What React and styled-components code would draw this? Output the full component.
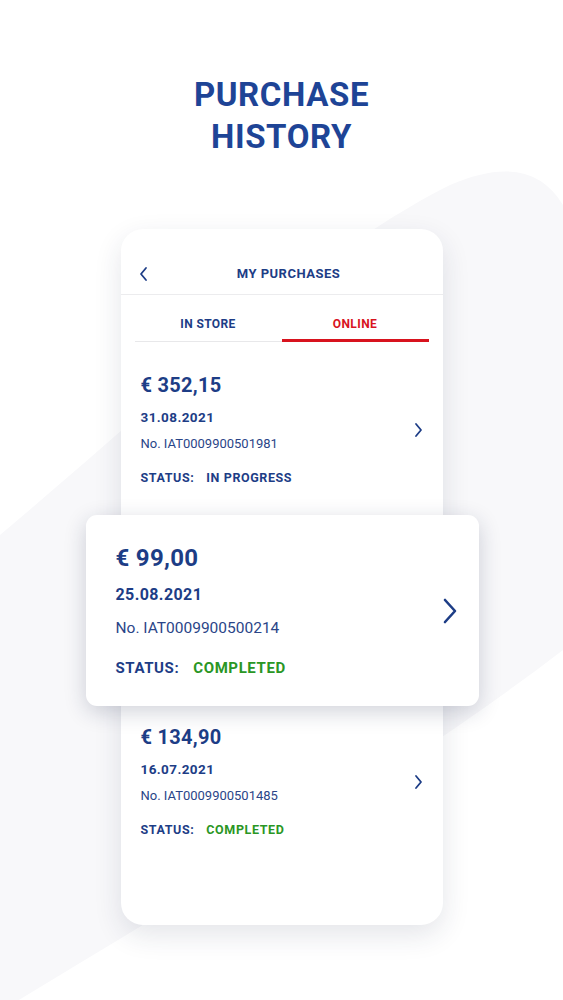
import React from "react";
import styled, { createGlobalStyle } from "styled-components";

const GlobalStyle = createGlobalStyle`
  html, body {
    margin: 0;
    padding: 0;
    background: #fff;
  }
  body {
    font-family: Roboto, "Noto Sans", "Liberation Sans", sans-serif;
  }
`;

const NAVY = "#1d3d86";

const purchases = [
  { price: "€ 352,15", date: "31.08.2021", no: "No. IAT0009900501981", status: "IN PROGRESS", done: false },
  { price: "€ 99,00", date: "25.08.2021", no: "No. IAT0009900500214", status: "COMPLETED", done: true },
  { price: "€ 134,90", date: "16.07.2021", no: "No. IAT0009900501485", status: "COMPLETED", done: true },
];

function Chevron({ size = "sm", dir = "right" }) {
  const big = size === "lg";
  const w = big ? 14 : 9;
  const h = big ? 26 : 16;
  const d = dir === "right"
    ? `M2 2 L${w - 2} ${h / 2} L2 ${h - 2}`
    : `M${w - 2} 2 L2 ${h / 2} L${w - 2} ${h - 2}`;
  return (
    <svg width={w} height={h} viewBox={`0 0 ${w} ${h}`} fill="none">
      <path d={d} stroke={NAVY} strokeWidth={big ? 2.6 : 1.8} strokeLinecap="round" strokeLinejoin="round" />
    </svg>
  );
}

function PurchaseRow({ item, big }) {
  return (
    <Row $big={big}>
      <Info>
        <Price $big={big}>{item.price}</Price>
        <DateText $big={big}>{item.date}</DateText>
        <Number $big={big}>{item.no}</Number>
        <Status $big={big}>
          <span>STATUS:</span>
          <StatusValue $done={item.done}>{item.status}</StatusValue>
        </Status>
      </Info>
      <Chevron size={big ? "lg" : "sm"} />
    </Row>
  );
}

export default function App() {
  const [first, featured, last] = purchases;
  return (
    <>
      <GlobalStyle />
      <Page>
        <Backdrop viewBox="0 0 563 1000" preserveAspectRatio="none">
          <path
            d="M-30 560 C 140 420, 300 260, 450 185 Q 530 150 563 205 L 563 650 C 380 790, 180 900, -30 1030 Z"
            fill="#f8f8fa"
          />
        </Backdrop>

        <Title>
          PURCHASE
          <br />
          HISTORY
        </Title>

        <Stage>
          <Phone>
            <Header>
              <BackButton>
                <Chevron dir="left" />
              </BackButton>
              <HeaderTitle>MY PURCHASES</HeaderTitle>
            </Header>
            <Tabs>
              <Tab>IN STORE</Tab>
              <Tab $active>ONLINE</Tab>
            </Tabs>
            <PurchaseRow item={first} />
            {/* slot for the row that is shown lifted out below */}
            <RowSlot />
            <PurchaseRow item={last} />
          </Phone>

          <FloatingCard>
            <PurchaseRow item={featured} big />
          </FloatingCard>
        </Stage>
      </Page>
    </>
  );
}

const Page = styled.div`
  position: relative;
  width: 563px;
  height: 1000px;
  overflow: hidden;
  background: #ffffff;
`;

const Backdrop = styled.svg`
  position: absolute;
  inset: 0;
  width: 100%;
  height: 100%;
  z-index: 0;
`;

const Title = styled.h1`
  position: relative;
  z-index: 1;
  margin: 0;
  padding-top: 74px;
  text-align: center;
  color: #1e4496;
  font-size: 33px;
  line-height: 42px;
  font-weight: 700;
  letter-spacing: 0.6px;
`;

const Stage = styled.div`
  position: relative;
  z-index: 1;
  margin-top: 71px;
`;

const Phone = styled.div`
  width: 322px;
  height: 696px;
  margin: 0 auto;
  background: #fff;
  border-radius: 22px;
  box-shadow: 0 10px 28px rgba(30, 40, 70, 0.12);
  overflow: hidden;
`;

const Header = styled.div`
  position: relative;
  box-sizing: border-box;
  height: 66px;
  padding: 36px 0 0 14px;
  border-bottom: 1px solid #ececee;
  text-align: center;
`;

const BackButton = styled.div`
  position: absolute;
  left: 18px;
  top: 37px;
  display: flex;
`;

const HeaderTitle = styled.div`
  color: ${NAVY};
  font-size: 13px;
  line-height: 18px;
  font-weight: 700;
  letter-spacing: 0.5px;
`;

const Tabs = styled.div`
  display: grid;
  grid-template-columns: 1fr 1fr;
  margin: 0 14px;
`;

const Tab = styled.div`
  padding: 20px 0 ${(p) => (p.$active ? "6px" : "8px")};
  text-align: center;
  font-size: 12px;
  line-height: 18px;
  font-weight: 700;
  letter-spacing: 0.4px;
  color: ${(p) => (p.$active ? "#d8131e" : NAVY)};
  border-bottom: ${(p) => (p.$active ? "3px solid #d8131e" : "1px solid #e8e8ea")};
`;

const Row = styled.div`
  display: flex;
  align-items: center;
  justify-content: space-between;
  box-sizing: border-box;
  height: ${(p) => (p.$big ? "191px" : "176px")};
  padding: ${(p) => (p.$big ? "0 22px 0 30px" : "0 20px 0 20px")};
`;

const RowSlot = styled.div`
  height: 176px;
`;

const Info = styled.div`
  display: flex;
  flex-direction: column;
  color: ${NAVY};
`;

const Price = styled.div`
  font-size: ${(p) => (p.$big ? "24px" : "20px")};
  line-height: ${(p) => (p.$big ? "28px" : "24px")};
  font-weight: 700;
  letter-spacing: 0.3px;
`;

const DateText = styled.div`
  margin-top: ${(p) => (p.$big ? "13px" : "11px")};
  font-size: ${(p) => (p.$big ? "16px" : "13.5px")};
  line-height: ${(p) => (p.$big ? "20px" : "18px")};
  font-weight: 700;
  letter-spacing: 0.4px;
`;

const Number = styled.div`
  margin-top: ${(p) => (p.$big ? "13px" : "9px")};
  font-size: ${(p) => (p.$big ? "15.5px" : "13px")};
  line-height: ${(p) => (p.$big ? "20px" : "18px")};
  font-weight: 400;
  color: #2a4588;
`;

const Status = styled.div`
  display: flex;
  gap: ${(p) => (p.$big ? "14px" : "12px")};
  margin-top: ${(p) => (p.$big ? "20px" : "16px")};
  font-size: ${(p) => (p.$big ? "15px" : "12.5px")};
  line-height: ${(p) => (p.$big ? "20px" : "18px")};
  font-weight: 700;
  letter-spacing: 0.6px;
`;

const StatusValue = styled.span`
  color: ${(p) => (p.$done ? "#2a9624" : NAVY)};
`;

const FloatingCard = styled.div`
  position: absolute;
  top: 286px;
  left: 50%;
  width: 393px;
  margin-left: -196px;
  background: #fff;
  border-radius: 11px;
  box-shadow: 0 6px 22px rgba(25, 35, 70, 0.2);
`;
